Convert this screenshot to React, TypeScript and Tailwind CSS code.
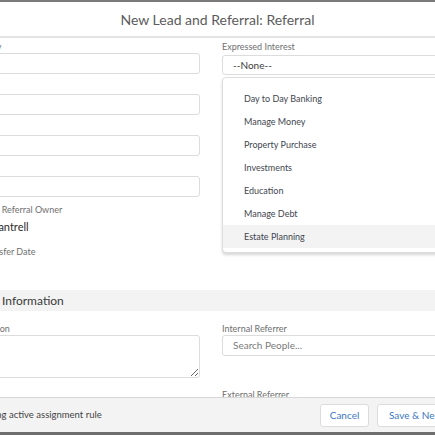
import React from 'react';

const FONT = { fontFamily: 'Lato, "Open Sans", "Liberation Sans", sans-serif' };

const interests = [
  'Day to Day Banking',
  'Manage Money',
  'Property Purchase',
  'Investments',
  'Education',
  'Manage Debt',
  'Estate Planning',
];

// 表单字段标签
const Label: React.FC<{ children: React.ReactNode }> = ({ children }) => (
  <div className="h-[13px] leading-[13px] text-[9px] text-[#6f6f6f] whitespace-nowrap">{children}</div>
);

const TextBox: React.FC<{ placeholder?: string; className?: string }> = ({ placeholder, className = '' }) => (
  <div
    className={`h-[21px] border border-[#dcdcdc] rounded-[3px] bg-white flex items-center pl-[10px] text-[10px] text-[#7a7a7a] ${className}`}
  >
    {placeholder}
  </div>
);

export default function App() {
  return (
    <div className="w-[435px] h-[435px] overflow-hidden bg-white flex flex-col" style={FONT}>
      {/* 顶部边线 */}
      <div className="h-[2px] bg-[#7a7a7a]" />

      {/* 标题栏 */}
      <div className="h-[36px] flex items-center justify-center border-b-2 border-[#e4e4e4]">
        <span className="text-[14px] text-[#5c5c5c] whitespace-nowrap">
          New Lead and Referral: Referral
        </span>
      </div>

      {/* 表单主体 */}
      <div className="flex-1 overflow-hidden">
        <div className="-ml-[72px] w-[578px] pt-[2px]">
          <div className="grid grid-cols-[236px_250px] gap-x-[22px] pl-[36px]">
            {/* 左列 */}
            <div className="flex flex-col">
              <Label>Company</Label>
              <TextBox />
              <div className="mt-[7px]">
                <Label>Email</Label>
                <TextBox />
              </div>
              <div className="mt-[7px]">
                <Label>Phone</Label>
                <TextBox />
              </div>
              <div className="mt-[7px]">
                <Label>Mobile</Label>
                <TextBox />
              </div>
              <div className="mt-[6px]">
                <Label>Lead and Referral Owner</Label>
                <div className="h-[15px] leading-[15px] mt-[3px] text-[11px] text-[#2b2b2b] whitespace-nowrap">
                  Elliot Cantrell
                </div>
              </div>
              <div className="mt-[11px]">
                <Label>Last Transfer Date</Label>
              </div>
            </div>

            {/* 右列 */}
            <div className="flex flex-col relative">
              <Label>Expressed Interest</Label>
              <div className="mt-[2px] h-[20px] border border-[#dcdcdc] rounded-[3px] flex items-center pl-[10px] text-[10px] text-[#3c3c3c]">
                --None--
              </div>
              {/* 下拉选项 */}
              <div className="absolute left-0 top-[37px] w-[260px] bg-white border border-[#dedede] rounded-[4px] shadow-[0_2px_3px_rgba(0,0,0,0.16)] pt-[9px] pb-[4px] z-10">
                {interests.map((item) => (
                  <div
                    key={item}
                    className={`h-[23px] flex items-center pl-[21px] text-[9px] text-[#3f4650] ${
                      item === 'Estate Planning' ? 'bg-[#f3f3f3]' : ''
                    }`}
                  >
                    {item}
                  </div>
                ))}
              </div>
            </div>
          </div>

          {/* 分组标题 */}
          <div className="mt-[32px] ml-[6px] h-[21px] bg-[#f3f3f3] flex items-center pl-[11px] text-[12px] text-[#3a3a3a]">
            Additional Information
          </div>

          <div className="grid grid-cols-[236px_250px] gap-x-[22px] pl-[36px] pt-[11px]">
            <div className="flex flex-col">
              <Label>Description</Label>
              <textarea
                readOnly
                className="h-[43px] border border-[#dcdcdc] rounded-[3px] bg-white outline-none"
              />
            </div>
            <div className="flex flex-col">
              <Label>Internal Referrer</Label>
              <TextBox placeholder="Search People..." />
              <div className="mt-[32px]">
                <Label>External Referrer</Label>
              </div>
            </div>
          </div>
        </div>
      </div>

      {/* 底部操作栏 */}
      <div className="h-[35px] border-t border-[#d6d6d6] bg-[#f3f3f3] overflow-hidden">
        <div className="-ml-[72px] w-[640px] h-full flex items-center">
          <div className="w-[392px] flex items-center pl-[9px] gap-[6px]">
            <div className="w-[12px] h-[12px] border border-[#c9c9c9] rounded-[2px] bg-white" />
            <span className="text-[9.5px] text-[#444] whitespace-nowrap">Assign using active assignment rule</span>
          </div>
          <div className="flex gap-[8px]">
            <button className="w-[49px] h-[23px] bg-white border border-[#dcdcdc] rounded-[3px] text-[10px] text-[#3a78c3]">
              Cancel
            </button>
            <button className="px-[11px] h-[23px] bg-white border border-[#dcdcdc] rounded-[3px] text-[10px] text-[#3a78c3] whitespace-nowrap">
              Save &amp; New
            </button>
            <button className="px-[11px] h-[23px] bg-[#0070d2] border border-[#0070d2] rounded-[3px] text-[10px] text-white">
              Save
            </button>
          </div>
        </div>
      </div>

      {/* 底部边线 */}
      <div className="h-[3px] bg-[#6e6e6e]" />
    </div>
  );
}
